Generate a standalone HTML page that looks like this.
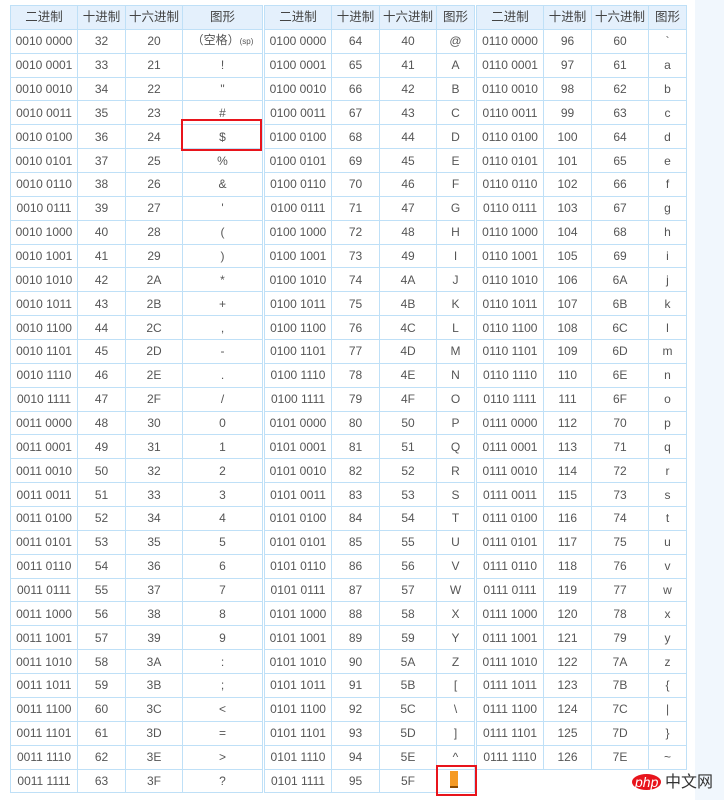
<!DOCTYPE html><html><head><meta charset="utf-8"><style>
body{margin:0;width:724px;height:800px;background:#fff;position:relative;overflow:hidden;font-family:"Liberation Sans","Noto Sans CJK SC",sans-serif;}
.band{position:absolute;left:695px;top:0;width:29px;height:800px;background:#f1f7fd}
table{position:absolute;top:5px;border-collapse:collapse;font-size:12px;color:#555;table-layout:fixed}
td,th{border:1px solid #bfe0f7;text-align:center;height:22.87px;padding:0;white-space:nowrap;font-weight:normal;line-height:14px;overflow:hidden}
th{background:#e4f0fc;font-size:12.5px;color:#444}
.red{position:absolute;border:2px solid #e8141c}
.logo{position:absolute;left:632px;top:768px;font-size:16px}
</style></head><body>
<div class="band"></div>
<div id="w"></div>
<div class="red" style="left:181px;top:119px;width:77px;height:28px"></div>
<div class="red" style="left:436px;top:765px;width:37px;height:27px"></div>
<div style="position:absolute;left:450px;top:771px;width:8px;height:15px;background:#f59a23;border-bottom:2px solid #8a4a00"></div>
<div class="logo"><span style="color:#fff;background:#e8141c;border-radius:50%;padding:0 3px;font-style:italic;font-size:14px">php</span><span style="color:#333;font-family:'Noto Sans CJK SC',sans-serif"> 中文网</span></div>
<script>
function g(c){ if(c==32) return "（空格）<span style='font-size:8px'>(sp)</span>"; if(c==95) return ""; var s=String.fromCharCode(c); return s.replace(/&/,"&amp;").replace(/</,"&lt;").replace(/>/,"&gt;");}
function b(c){var s=c.toString(2);while(s.length<8)s="0"+s;return s.slice(0,4)+" "+s.slice(4);}
var defs=[[10,[67,48,57,80],32,63],[264,[67,48,57,38],64,95],[476,[67,48,57,38],96,126]];
var h="";
defs.forEach(function(d){
 var w=d[1];h+="<table style='left:"+d[0]+"px;width:"+(w[0]+w[1]+w[2]+w[3])+"px'><colgroup>";
 w.forEach(function(x){h+="<col style='width:"+x+"px'>"});
 h+="</colgroup><tr><th>二进制</th><th>十进制</th><th>十六进制</th><th>图形</th></tr>";
 for(var c=d[2];c<=d[3];c++)h+="<tr><td>"+b(c)+"</td><td>"+c+"</td><td>"+c.toString(16).toUpperCase()+"</td><td>"+g(c)+"</td></tr>";
 h+="</table>";
});
document.getElementById("w").innerHTML=h;
</script>
</body></html>
